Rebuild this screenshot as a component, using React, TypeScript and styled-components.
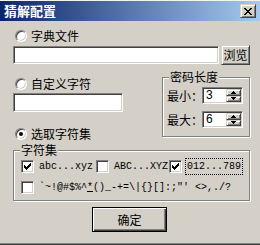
import React from 'react';
import styled, { createGlobalStyle, css } from 'styled-components';

const FACE = '#D4D0C8';
const CJK = `"Noto Sans CJK SC", "Noto Sans", sans-serif`;
const MONO = `"Liberation Mono", "DejaVu Sans Mono", monospace`;

const GlobalStyle = createGlobalStyle`
  html, body { margin: 0; padding: 0; background: ${FACE}; }
  * { box-sizing: border-box; }
`;

const sunken = css`
  border: 1px solid;
  border-color: #808080 #ffffff #ffffff #808080;
  box-shadow: inset 1px 1px #404040, inset -1px -1px ${FACE};
`;

const raised = css`
  border: 1px solid;
  border-color: ${FACE} #404040 #404040 ${FACE};
  box-shadow: inset 1px 1px #ffffff, inset -1px -1px #808080;
`;

const Window = styled.div`
  width: 260px;
  height: 245px;
  display: flex;
  flex-direction: column;
  background: ${FACE};
  border-top: 1px solid #f4f3ef;
  border-bottom: 1px solid #404040;
  box-shadow: inset 0 -1px #808080;
  font-family: ${CJK};
  font-size: 12px;
  color: #000;
`;

const TitleBar = styled.div`
  height: 20px;
  display: flex;
  align-items: center;
  justify-content: space-between;
  padding: 0 4px 0 4px;
  background: linear-gradient(to right, #0a246a, #a6caf0);
`;

const Title = styled.span`
  color: #fff;
  font-weight: 700;
  font-size: 13px;
  line-height: 20px;
`;

const CloseButton = styled.div`
  ${raised};
  width: 16px;
  height: 14px;
  display: flex;
  align-items: center;
  justify-content: center;
  background: ${FACE};
`;

const Body = styled.div`
  flex: 1;
  display: flex;
  flex-direction: column;
  padding: 0 10px 0 13px;
`;

const RadioRow = styled.div<{ $mt: number }>`
  display: flex;
  align-items: center;
  gap: 4px;
  height: 13px;
  padding-left: 2px;
  margin-top: ${(p) => p.$mt}px;
  line-height: 13px;
  white-space: nowrap;
`;

const Radio = styled.span`
  ${sunken};
  width: 12px;
  height: 12px;
  border-radius: 50%;
  background: #fff;
  display: flex;
  align-items: center;
  justify-content: center;
`;

const RadioDot = styled.span`
  width: 4px;
  height: 4px;
  border-radius: 50%;
  background: #000;
`;

const FieldRow = styled.div`
  display: flex;
  align-items: center;
  gap: 2px;
  height: 20px;
  margin-top: 3px;
`;

const TextField = styled.div<{ $w?: number; $h: number; $mt?: number }>`
  ${sunken};
  background: #fff;
  height: ${(p) => p.$h}px;
  margin-top: ${(p) => p.$mt ?? 0}px;
  ${(p) => (p.$w ? `width: ${p.$w}px;` : 'flex: 1;')}
`;

const SmallButton = styled.div`
  ${raised};
  width: 29px;
  height: 20px;
  display: flex;
  align-items: center;
  justify-content: center;
  background: ${FACE};
  line-height: 14px;
`;

const Middle = styled.div`
  display: flex;
  align-items: flex-start;
  margin-top: 12px;
`;

const LeftCol = styled.div`
  width: 149px;
  display: flex;
  flex-direction: column;
`;

const GroupBox = styled.div`
  position: relative;
  border: 1px solid #808080;
  box-shadow: inset 1px 1px #fff, 1px 1px #fff;
`;

const Legend = styled.span`
  position: absolute;
  top: -8px;
  left: 6px;
  padding: 0 1px;
  background: ${FACE};
  line-height: 14px;
  white-space: nowrap;
`;

const LengthGroup = styled(GroupBox)`
  width: 88px;
  margin-left: auto;
  display: flex;
  flex-direction: column;
  gap: 7px;
  padding: 9px 6px 8px 4px;
`;

const SpinRow = styled.div`
  display: flex;
  align-items: center;
  height: 17px;
`;

const SpinLabel = styled.span`
  width: 35px;
  line-height: 14px;
  white-space: nowrap;
`;

const SpinBox = styled.div`
  ${sunken};
  width: 41px;
  height: 17px;
  padding: 1px;
  display: flex;
  background: #fff;
`;

const SpinValue = styled.span`
  flex: 1;
  padding-left: 2px;
  font-family: "Liberation Sans", Arial, sans-serif;
  font-size: 12px;
  line-height: 13px;
`;

const SpinButtons = styled.div`
  width: 15px;
  display: flex;
  flex-direction: column;
`;

const SpinButton = styled.div`
  ${raised};
  flex: 1;
  display: flex;
  align-items: center;
  justify-content: center;
  background: ${FACE};
`;

const CharsetGroup = styled(GroupBox)`
  margin-top: 10px;
  height: 51px;
  display: flex;
  flex-direction: column;
  gap: 8px;
  padding: 9px 0 6px 7px;
`;

const CharRow = styled.div`
  display: flex;
  align-items: center;
  height: 13px;
`;

const CheckItem = styled.div<{ $w?: number }>`
  display: flex;
  align-items: center;
  gap: 5px;
  ${(p) => (p.$w ? `width: ${p.$w}px;` : '')}
`;

const Checkbox = styled.span`
  ${sunken};
  width: 13px;
  height: 13px;
  flex: none;
  background: #fff;
  display: flex;
  align-items: center;
  justify-content: center;
`;

const CharText = styled.span<{ $focus?: boolean }>`
  font-family: ${MONO};
  font-size: 10px;
  line-height: 13px;
  white-space: pre;
  ${(p) =>
    p.$focus &&
    css`
      outline: 1px dotted #000;
      outline-offset: 1px;
    `}
`;

const Footer = styled.div`
  margin-top: 6px;
  padding-left: 79px;
`;

const OkButton = styled.div`
  width: 75px;
  height: 25px;
  border: 1px solid #000;
  background: ${FACE};
  box-shadow: inset 1px 1px #fff, inset -1px -1px #404040, inset -2px -2px #808080;
  display: flex;
  align-items: center;
  justify-content: center;
  line-height: 14px;
`;

const CloseGlyph = () => (
  <svg width="8" height="7" viewBox="0 0 8 7" shapeRendering="crispEdges">
    <path
      d="M0 0h2v1h-2z M6 0h2v1h-2z M1 1h2v1h-2z M5 1h2v1h-2z M2 2h4v1h-4z M3 3h2v1h-2z M2 4h4v1h-4z M1 5h2v1h-2z M5 5h2v1h-2z M0 6h2v1h-2z M6 6h2v1h-2z"
      fill="#000"
    />
  </svg>
);

const CheckGlyph = () => (
  <svg width="7" height="7" viewBox="0 0 7 7" shapeRendering="crispEdges">
    <path
      d="M6 0h1v1h-1z M5 1h2v1h-2z M0 2h1v1h-1z M4 2h3v1h-3z M0 3h2v1h-2z M3 3h3v1h-3z M0 4h5v1h-5z M1 5h3v1h-3z M2 6h1v1h-1z"
      fill="#000"
    />
  </svg>
);

const Arrow = ({ down }: { down?: boolean }) => (
  <svg width="5" height="3" viewBox="0 0 5 3" shapeRendering="crispEdges">
    <path
      d={down ? 'M0 0h5v1h-5z M1 1h3v1h-3z M2 2h1v1h-1z' : 'M2 0h1v1h-1z M1 1h3v1h-3z M0 2h5v1h-5z'}
      fill="#000"
    />
  </svg>
);

const Spin = ({ label, value }: { label: string; value: string }) => (
  <SpinRow>
    <SpinLabel>{label}</SpinLabel>
    <SpinBox>
      <SpinValue>{value}</SpinValue>
      <SpinButtons>
        <SpinButton>
          <Arrow />
        </SpinButton>
        <SpinButton>
          <Arrow down />
        </SpinButton>
      </SpinButtons>
    </SpinBox>
  </SpinRow>
);

const Check = ({
  checked,
  width,
  focus,
  children
}: {
  checked?: boolean;
  width?: number;
  focus?: boolean;
  children: React.ReactNode;
}) => (
  <CheckItem $w={width}>
    <Checkbox>{checked && <CheckGlyph />}</Checkbox>
    <CharText $focus={focus}>{children}</CharText>
  </CheckItem>
);

const App = () => {
  return (
    <>
      <GlobalStyle />
      <Window>
        <TitleBar>
          <Title>猜解配置</Title>
          <CloseButton>
            <CloseGlyph />
          </CloseButton>
        </TitleBar>
        <Body>
          <RadioRow $mt={8}>
            <Radio />
            字典文件
          </RadioRow>
          <FieldRow>
            <TextField $h={18} />
            <SmallButton>浏览</SmallButton>
          </FieldRow>

          <Middle>
            <LeftCol>
              <RadioRow $mt={0}>
                <Radio />
                自定义字符
              </RadioRow>
              <TextField $w={110} $h={19} $mt={3} />
              <RadioRow $mt={15}>
                <Radio>
                  <RadioDot />
                </Radio>
                选取字符集
              </RadioRow>
            </LeftCol>
            <LengthGroup>
              <Legend>密码长度</Legend>
              <Spin label="最小：" value="3" />
              <Spin label="最大：" value="6" />
            </LengthGroup>
          </Middle>

          <CharsetGroup>
            <Legend>字符集</Legend>
            <CharRow>
              <Check checked width={75}>
                abc...xyz
              </Check>
              <Check width={73}>ABC...XYZ</Check>
              <Check checked focus>
                012...789
              </Check>
            </CharRow>
            <CharRow>
              <Check>
                `~!@#$%^<u>*</u>()_-+=\|{'{}'}[]:;"' {'<>'},./?
              </Check>
            </CharRow>
          </CharsetGroup>

          <Footer>
            <OkButton>确定</OkButton>
          </Footer>
        </Body>
      </Window>
    </>
  );
};

export default App;
